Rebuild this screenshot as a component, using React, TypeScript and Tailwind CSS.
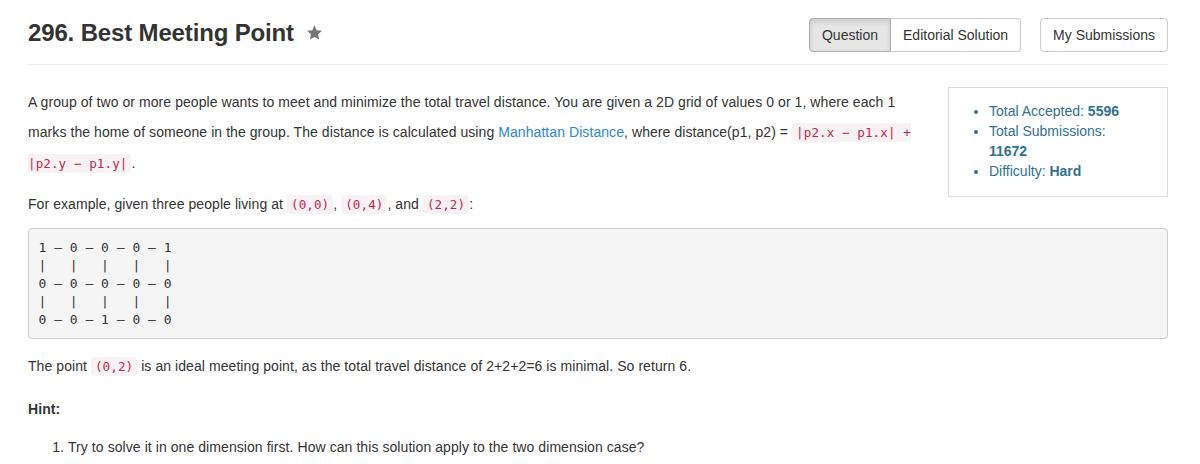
import React from 'react';

const sans = "font-['Liberation_Sans',Arial,sans-serif]";
const mono = "font-['DejaVu_Sans_Mono','Liberation_Mono',monospace]";

function Code({ children }: { children: React.ReactNode }) {
  return (
    <code className={`${mono} text-[12.6px] text-[#c7254e] bg-[#f9f2f4] rounded px-1 py-0.5`}>
      {children}
    </code>
  );
}

function Star() {
  return (
    <svg viewBox="0 0 24 24" className="w-[17px] h-[17px] ml-[12px]" fill="#777">
      <path d="M12 1.8l3.1 6.9 7.5.8-5.6 5.1 1.6 7.4L12 18.2l-6.6 3.8 1.6-7.4-5.6-5.1 7.5-.8z" />
    </svg>
  );
}

const grid = `1 — 0 — 0 — 0 — 1
|   |   |   |   |
0 — 0 — 0 — 0 — 0
|   |   |   |   |
0 — 0 — 1 — 0 — 0`;

export default function App() {
  return (
    <div className={`${sans} bg-white text-[#333] text-[14px] w-[1200px] h-[464px] overflow-hidden`}>
      <div className="mx-[28px] w-[1140px]">
        {/* Header */}
        <div className="flex items-center justify-between pt-[18px] pb-[12px] border-b border-[#eee]">
          <div className="flex items-center -mt-[5px]">
            <h3 className="text-[24px] font-bold leading-[33px] tracking-[-0.15px] text-[#333]">296. Best Meeting Point</h3>
            <Star />
          </div>
          <div className="flex items-center">
            <div className="flex">
              <button className="h-[34px] px-3 border border-[#adadad] bg-[#e6e6e6] rounded-l shadow-[inset_0_3px_5px_rgba(0,0,0,0.125)] text-[#333] leading-5">
                Question
              </button>
              <button className="h-[34px] px-3 border border-[#ccc] border-l-0 bg-white rounded-r text-[#333] leading-5">
                Editorial Solution
              </button>
            </div>
            <button className="ml-[19px] h-[34px] px-3 border border-[#ccc] bg-white rounded text-[#333] leading-5">
              My Submissions
            </button>
          </div>
        </div>

        {/* Question body */}
        <div className="mt-[22px] leading-[30px] tracking-[0.07px]">
          <div className="float-right w-[220px] ml-[28px] border border-[#ddd] pt-[13px] pb-[15px] text-[#31708f] leading-5 tracking-normal">
            <ul className="list-disc pl-[40px] pr-[30px] marker:text-[#31708f]">
              <li>Total Accepted: <b>5596</b></li>
              <li>Total Submissions: <b>11672</b></li>
              <li>Difficulty: <b>Hard</b></li>
            </ul>
          </div>
          <p className="mb-[10px]">
            A group of two or more people wants to meet and minimize the total travel distance. You are given a 2D grid of values 0 or 1, where each 1 marks the home of someone in the group. The distance is calculated using{' '}
            <a className="text-[#2a87d0]">Manhattan Distance</a>, where distance(p1, p2) = <Code>|p2.x − p1.x| + |p2.y − p1.y|</Code>.
          </p>
          <p className="mb-[8px]">
            For example, given three people living at <Code>(0,0)</Code>, <Code>(0,4)</Code>, and <Code>(2,2)</Code>:
          </p>
          <pre className={`${mono} clear-both text-[13px] leading-[18px] tracking-normal text-[#333] bg-[#f5f5f5] border border-[#ccc] rounded p-[9.5px] mb-[12px]`}>
            {grid}
          </pre>
          <p className="mb-[10px]">
            The point <Code>(0,2)</Code> is an ideal meeting point, as the total travel distance of 2+2+2=6 is minimal. So return 6.
          </p>
          <p className="mt-[12px] mb-[8px] font-bold">Hint:</p>
          <ol className="list-decimal pl-[40px]">
            <li>Try to solve it in one dimension first. How can this solution apply to the two dimension case?</li>
          </ol>
        </div>
      </div>
    </div>
  );
}
